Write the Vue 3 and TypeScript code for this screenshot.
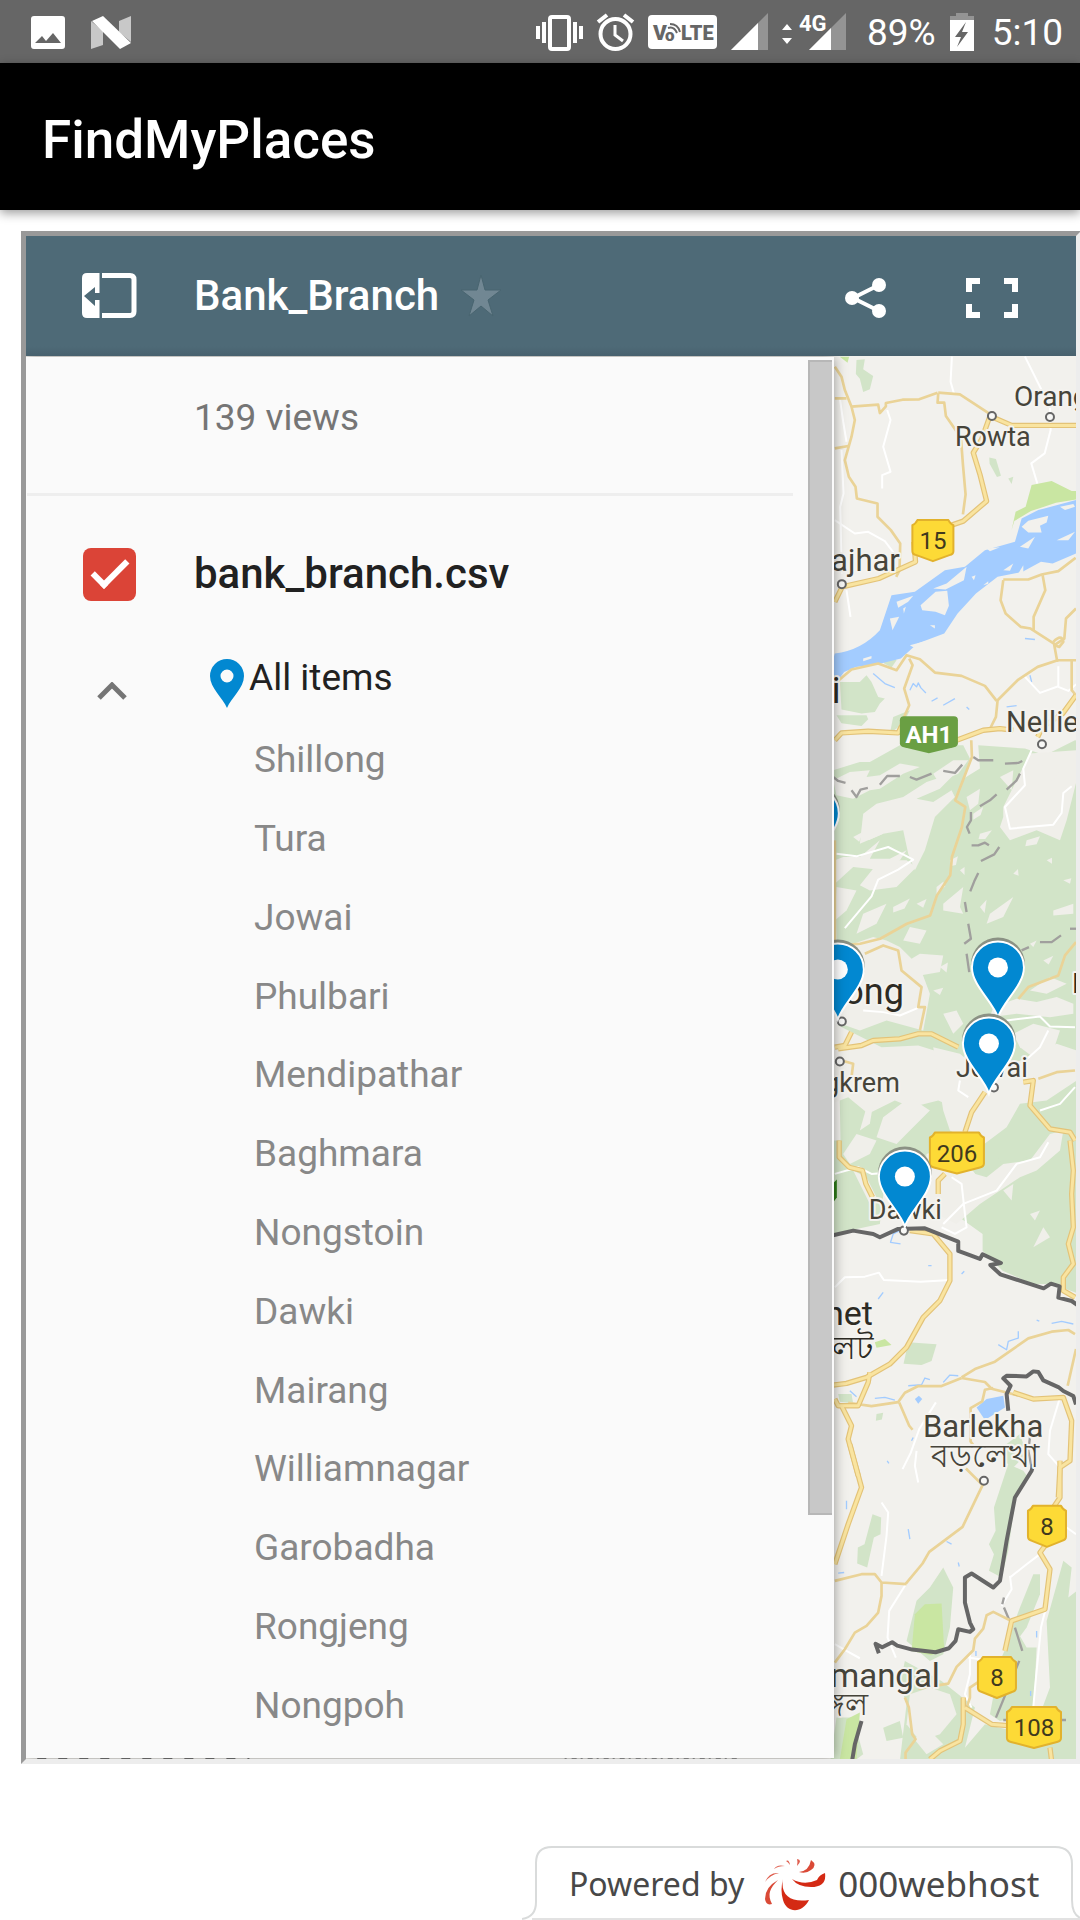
<script setup lang="ts">
import { ref } from 'vue'

interface Label { text: string; x: number; y: number; size: number; end?: boolean; light?: boolean }
interface Shield { text: string; x: number; y: number; w: number }
interface Point { x: number; y: number }

const layerOn = ref<boolean>(true)
const expanded = ref<boolean>(true)

const places: string[] = [
  'Shillong', 'Tura', 'Jowai', 'Phulbari', 'Mendipathar', 'Baghmara', 'Nongstoin',
  'Dawki', 'Mairang', 'Williamnagar', 'Garobadha', 'Rongjeng', 'Nongpoh',
]

const labels: Label[] = [
  { text: 'Orang', x: 1014, y: 406, size: 28, light: true },
  { text: 'Rowta', x: 955, y: 446, size: 27, light: true },
  { text: 'ajhar', x: 900, y: 571, size: 31, end: true, light: true },
  { text: 'i', x: 832, y: 703, size: 36 },
  { text: 'Nellie', x: 1006, y: 732, size: 29, light: true },
  { text: 'ong', x: 904, y: 1004, size: 36, end: true },
  { text: 'H', x: 1072, y: 993, size: 28 },
  { text: 'Jowai', x: 956, y: 1076, size: 27, light: true },
  { text: 'gkrem', x: 900, y: 1091, size: 27, end: true, light: true },
  { text: 'Dawki', x: 869, y: 1218, size: 27, light: true },
  { text: 'het', x: 873, y: 1324, size: 34, end: true },
  { text: 'লেট', x: 873, y: 1358, size: 32, end: true },
  { text: 'Barlekha', x: 923, y: 1436, size: 31, light: true },
  { text: 'বড়লেখা', x: 931, y: 1466, size: 32, light: true },
  { text: 'mangal', x: 940, y: 1686, size: 33, end: true, light: true },
  { text: 'ঙ্গল', x: 868, y: 1714, size: 31, end: true, light: true },
]

const shields: Shield[] = [
  { text: '15', x: 933, y: 520, w: 41 },
  { text: '206', x: 957, y: 1132, w: 54 },
  { text: '8', x: 1047, y: 1505, w: 38 },
  { text: '8', x: 997, y: 1656, w: 38 },
  { text: '108', x: 1034, y: 1706, w: 54 },
]

const shieldPath = (w: number): string => {
  const h = w / 2
  return `M${-h + 5} 0H${h - 5}Q${h - 3} 4 ${h} 5V31Q${h} 34 ${h - 4} 35L0 41L${-h + 4} 35Q${-h} 34 ${-h} 31V5Q${-h + 3} 4 ${-h + 5} 0Z`
}

const towns: Point[] = [
  { x: 992, y: 416 }, { x: 1050, y: 417 }, { x: 842, y: 584 }, { x: 1042, y: 744 },
  { x: 842, y: 1021 }, { x: 840, y: 1061 }, { x: 994, y: 1087 }, { x: 904, y: 1230 }, { x: 984, y: 1480 },
]

const pins: Point[] = [
  { x: 813, y: 813 }, { x: 838, y: 969 }, { x: 998, y: 967 }, { x: 989, y: 1043 }, { x: 905, y: 1176 },
]

// Terrain and road geometry is kept on a grid three times finer than the page.
const forest: string[] = [
  'M170 60l25 -2 -5 30 30 20 -10 40 -20 8 -10 -40 -12 -14z', 'M568 352l20 5 15 50 -12 4 -22 -40z', 'M625 415l15 -5 -5 22z',
  'M245 950l30 -5 15 15 -15 22 -22 -12z', 'M120 1025l60 0 20 -20 15 20 20 45 20 5 -15 15 -15 25 -40 5 -60 -12z', 'M110 1125l90 0 5 12 -20 20 -60 -8z',
  'M280 1130l50 -20 -20 40 -40 30z',
  'M100 1290l80 -25 30 0 90 -50 190 0 20 40 -20 60 50 -30 -5 -70 140 10 60 20 90 -45 60 20 0 1300 -70 -100 -70 100 -80 40 -60 -80 -180 20 -80 80 -80 -60 -140 20z',
  'M100 2400l100 0 60 80 -20 170 -140 30z',
  'M330 2400l230 0 60 90 -80 30 -50 -70 -20 60 -80 -40z',
  'M478 2630l60 -60 90 -40 30 -70 150 -60 30 50 0 410 -80 -30 -60 0 -90 -40 -60 -60 0 -50z',
  'M325 3005l85 6 -15 50 -30 12 -54 -4z', 'M115 3160l40 0 5 28 -40 -5z', 'M230 3220l20 -4 -4 20 -18 4z',
  'M620 3310l40 -30 20 60 -40 40 -30 -20z',
  'M218 3520l26 10 -2 50 -20 10 -20 90 -30 -12 2 -48 20 -10z',
  'M625 3370l45 20 15 20 -40 70 -20 150 -20 80 -38 -20 15 -50 -15 -30 20 -40 -5 -70z',
  'M430 3680l10 20 20 40 -10 120 -20 80 -40 20 -70 -60 30 -120 40 -40z',
  'M700 3700l20 0 0 60 -40 100 -30 40 -20 -20 30 -80z', 'M790 3660l25 20 -10 90 25 -20 0 650 -70 0 20 -200 -60 -80 30 -80 -10 -200z',
  'M645 3860l35 60 30 0 -10 200 -100 20 -30 -20 30 -160z',
  'M315 3960l110 60 100 80 -30 120 60 -70 130 30 145 -60 0 200 -440 0 -90 -60 20 -170 -20 -60z',
  'M110 4130l50 0 30 110 -40 30 -60 0z', 'M250 4160l50 -20 10 50 -50 10z',
]

const clearings: string[] = [
  'M100 1320l50 -25 60 -5 -10 20 40 -5 60 -35 60 10 -50 20 -70 45 -30 5 -50 25 -50 -10z',
  'M190 1420l40 -30 80 -20 70 -45 90 -30 -50 50 -70 30 50 10 55 -35 10 20 -60 60 -30 100 -30 60 -20 -50 -15 -70 -60 10 -70 30z',
  'M400 1300l60 -40 45 0 -30 40 -60 25z', 'M500 1370l40 -25 -5 45 -25 20z',
  'M105 1560l25 -10 50 0 60 -50 -30 55 60 0 50 -25 -20 30 -50 30 -90 -10 -55 50z',
  'M240 1560l80 0 30 20 -60 60 -80 10 -30 -15z', 'M110 1640l60 10 -30 60 -35 30z',
  'M190 1720l70 -30 -30 60 -60 30z', 'M430 1690l60 -50 -10 60 10 20 -60 -10z', 'M570 1720l70 -50 -30 60 -50 20z',
  'M610 1400l40 -80 40 -80 140 -10 0 90 -30 120 -20 60 -70 -30 -80 30 -30 -40 10 -30z',
  'M650 1310l50 -40 80 20 -20 30 -80 25z', 'M760 1710l60 -20 0 30 -60 5z', 'M600 1310l40 -20 -5 60z',
  'M160 1810l60 -20 40 10 40 20 60 60 30 80 -20 110 -110 -30 -80 30 -70 -25 20 -60z',
  'M330 1760l50 10 -20 40 -50 -10z', 'M310 1870l50 -30 70 5 -10 50 -60 10z',
  'M300 1950l60 10 5 60 -90 20 -50 -20z', 'M430 2020l40 -10 20 40 -30 30z',
  'M580 2000l70 -25 60 10 60 -15 50 20 0 30 -70 10 -100 -10 -80 10z',
  'M640 2080l60 -30 80 20 -20 60 -60 20 -40 -30z', 'M690 1950l60 -40 50 20 -60 30z',
  'M105 2050l60 30 80 40 110 -5 80 25 40 60 70 20 -10 70 -50 20 -70 -30 -80 20 -50 -20 -80 40 -60 -50 -50 20z',
  'M400 2120l80 20 60 50 100 -20 130 -60 60 20 0 90 -90 60 -80 10 -40 70 -80 60 -90 -50 -20 -60z',
  'M250 2330l80 -60 60 40 -60 60 -40 40 -60 -20z', 'M200 2300l20 -10 -10 60 -30 20z',
  'M130 2440l40 -60 60 20 -20 40 -60 30z', 'M160 2490l40 20 30 60 -20 20z',
  'M380 2440l60 -20 50 70 70 20 50 -40 80 -10 60 -80 40 -10 -10 60 -70 60 -50 20 -120 80 -70 60 -60 -30 -40 -70z',
  'M610 2550l30 -20 -5 50z', 'M730 2660l20 30 -50 30z', 'M690 2620l30 -10 -15 30z',
  'M330 4060l60 -20 60 20 20 60 -50 60 -60 20 -40 -50z', 'M340 4190l60 -10 30 30 -50 30z',
  'M520 1420l30 -20 -8 24 -22 14z', 'M450 1560l24 -12 -6 26 -18 4z', 'M540 1480l36 -10 -20 26 -20 0z', 'M410 1640l20 -16 6 14 -26 24z',
  'M680 1500l40 -12 -10 24 -34 6z', 'M740 1560l16 -8 0 18z', 'M640 1600l14 -14 2 20z', 'M540 1700l20 -22 -6 40z',
  'M480 1590l14 -10 0 24z', 'M790 1620l24 -6 -4 16z', 'M280 1700l50 -26 -16 30 -34 12z', 'M350 1690l30 -14 -10 26z',
  'M420 1880l24 -14 -4 30z', 'M400 1950l30 -8 -10 22z', 'M730 1860l30 -14 -14 26z', 'M690 1810l20 -10 -10 20z',
  'M230 1460l20 20 -44 20 4 -20z', 'M160 1490l30 -16 -12 30z', 'M500 2320l36 10 -20 20z',
]

const whiteRoads: string[] = [
  'M456 50l-4 75 10 35', 'M675 50l45 90 30 60 2 70 -18 70 -40 30 18 60', 'M262 210l10 30 -22 80 22 75 -25 10 0 40', 'M120 175l10 70 10 60', 'M125 330l6 130 -10 40 5 200',
  'M105 540l60 40 40 -5 50 28 30 40', 'M140 750l12 80', 'M675 1010l45 48 55 -20 0 -60', 'M775 1040l30 12 24 -20',
  'M695 1230l-25 55 5 50 -60 65 15 65 130 -12 25 -35 5 -60 25 -20', 'M110 1540l60 8 95 -28 20 10 20 10 35 18 -45 30 -60 30 -20 50 -80 95',
  'M190 2010l60 5 50 10 60 -25', 'M620 2040l100 -12 30 30 75 2', 'M745 2070l-25 50 -55 50', 'M480 2220l-5 30 30 20',
  'M105 2500l70 -20 40 20 60 -5', 'M455 2510l30 20 10 90 5 40 -35 20 -40 -20', 'M430 2650l60 -60 100 -40 60 -80 70 -20 25 -45', 'M720 2310l60 -20 45 -50',
  'M105 2840l30 -30 60 -2 42 -12 15 22 110 5 90 -5', 'M408 3185l-50 80 -25 70 -25 50', 'M350 3330l-5 45 10 50', 'M245 3485l20 30 -5 70 -15 120',
  'M318 3730l-50 80 -5 80 25 60', 'M105 3910l35 20 40 22', 'M780 3170l-30 100 -5 70 35 40', 'M630 3710l50 -40 40 -30',
  'M505 3950l40 6', 'M510 3940l0 60 -15 60 20 40', 'M738 3800l-15 60 -15 150 -10 110', 'M630 3705l5 40 -30 50', 'M800 3560l28 20',
]

const roads: string[] = [
  'M105 80l20 30 10 40 20 50 10 40 -10 50 -20 70 12 50 20 30 4 35 62 15 0 40 40 40 28 40 -2 80 -10 20', 'M155 200l80 -6 5 25 18 -20 0 -10 50 -10 50 -1 55 -20',
  'M105 175h35M105 325l45 -8', 'M415 160l-2 28 20 0 5 40 45 65 6 80 8 90 -8 60', 'M415 158l65 5 95 62',
  'M610 720l-8 60 15 40 45 40 30 5 70 45 10 55', 'M610 718l75 0 40 -15 50 -10 52 -40', 'M728 705l8 45 -35 80 0 40', 'M828 805l-30 30 -5 60 -30 20', 'M760 905q25 -25 30 0l-12 15 -15 -5', 'M828 960l-55 0 -60 20 -60 40 -60 60 -5 50 -20 40',
  'M105 1030l50 -42 80 -18 55 20 30 -45 40 12 45 40 80 10 70 30 35 45', 'M328 955l10 20 -25 70 15 50 -35 80', 'M815 960l0 90 13 15',
  'M514 1200l2 50 -50 130 30 20 -10 60 -30 90 -5 55 -40 60 -20 60 -70 25 -80 45 -60 15 -60 5', 'M105 1500l0 300',
  'M195 1840l55 -25 45 15 10 60 60 50 -10 60 20 0 -15 70', 'M655 1975l30 -35 90 -35 20 -60 33 -40', 'M715 2215l55 -20 55 -5', 'M125 2160l35 10 -5 40 -20 30',
  'M485 3110l40 -25 60 -22 100 -70 70 -20 50 -5 20 12', 'M828 3025l-25 110', 'M485 3112l70 12 20 20 80 20', 'M485 3112l-60 24 -70 0 -40 20 -20 28 -80 12 -70 -10', 'M298 3185l30 70 10 12', 'M580 3142l-25 5 -8 35 -35 20 0 100 15 20',
  'M105 3720l80 -20 40 0 20 25 75 5M245 3725l0 40 -10 50 -35 40 -35 20 -30 50 -30 40', 'M318 3728l50 -60 20 -35 100 -75 60 -125 -50 -50',
  'M630 3838l-50 -25 -20 10 -10 40 -25 30 -5 35 -50 50 -25 50 -90 15', 'M315 4070l12 30 10 80 10 15 -30 40 0 30', 'M540 4020l-30 20 0 30 -10 30',
]

const highways: string[] = [
  'M105 785l22 -45 110 -25 110 -50 -5 -60', 'M455 555l35 -12 70 -60 -20 -80 -20 -65 25 -40 25 -70 65 28 200 0', 'M105 1200l20 -22 80 -5 90 5 10 -20', 'M470 1200l80 -30 50 -5 40 5', 'M828 1065l-40 55 -60 40 -15 30',
  'M115 2125l70 -10 35 -15 80 -5 55 -15 40 0 80 40', 'M105 2120l30 -5 20 -40', 'M670 2225l30 -5 -10 75 60 70 60 10 15 25', 'M555 2255l-40 60 -20 60',
  'M118 2400l0 50 30 30 40 10 10 40 20 40', 'M435 2500l-20 20 0 40', 'M810 2400l10 90 -5 70 5 100 -15 50 15 60 -30 40 0 40 35 20', 'M330 2670l70 10 50 60 0 80 -30 60 -50 50 -50 90 -50 50 -70 40 -60 18 -40 5',
  'M210 3095l-5 30 -30 70 -60 0 -10 -20', 'M125 3195l30 60 -10 40 30 110', 'M640 3155l60 20 90 -5 25 70 -5 120 -30 20 -5 90', 'M150 3310l35 130 -40 110 -40 120',
  'M780 3360l0 110 -20 30', 'M735 3615l-15 20 30 50 -15 120 -100 35 -20 90', 'M490 4070l0 80 -10 50 -60 30 -30 25M495 4100l80 50 60 5', 'M750 4220l5 40',
]

const water: string[] = [
  'M105 940q80 -10 135 -70l35 -105 70 -10 90 -65 60 -10 60 -50 90 -25 20 -70 50 -25 113 -30V640l-70 30 -35 -5 -55 30 -75 15 -65 50 -55 60 -40 60 -80 30 -50 45 -60 15 -75 10 -35 15 -30 40 -28 10z',
  'M530 3200l30 -25 50 -10 5 35 -60 38z', 'M345 3175l12 -10 10 10 -12 14z',
]
const islands: string[] = [
  'M290 785l50 -18 -15 18 -30 18z', 'M270 835l28 -5 -20 40z', 'M362 795l45 -40 35 -3 5 45 -12 28 -28 -10 -40 -5z', 'M400 745l40 -15 60 -50 -8 40 -55 28z', 'M660 620l45 -30 -20 35z', 'M665 560l20 -18 60 -15 -5 20 -20 10 5 20 -40 0z', 'M770 600l55 -25 -20 25z', 'M330 915l45 -12 0 8 -35 10z', 'M190 955l25 -8 0 8 -25 8z', 'M560 625l40 -4 -30 12z', 'M780 500l40 -8 5 8 -30 10z', 'M515 710l12 -5 -5 15z', 'M550 735l15 -12 0 8z', 'M390 855l15 0 0 10z', 'M310 805l8 -5 -6 20z', 'M610 690l30 -20 -10 22z', 'M655 700l15 -25 0 22z',
]
const parks: string[] = [
  'M635 570l12 -55 30 -15 18 -65 60 -12 60 30 13 0 0 25 -60 10 -75 25 -50 30z', 'M120 50l28 0 -5 18z', 'M225 3005l30 -10 20 18 -45 8z', 'M335 3930l10 -110 30 -30 50 -2 8 140 -40 15z', 'M120 4255l20 -120 40 -20 -10 140z', 'M695 535l25 -12 5 12 -20 8z',
]
const creeks: string[] = [
  'M220 1000l35 30 30 12', 'M330 1050l10 -20 10 10 5 -12 8 15 15 15', 'M395 1083l18 -10M430 1095l35 -20M500 1100l8 8M620 1100l30 -4', 'M690 1005l5 20M675 895l30 3', 'M310 2665l-30 15 -8 25 30 5M320 2650l-18 18', 'M595 3012l25 15 5 -25 30 -10 0 -20', 'M755 2948l30 -6 35 8M710 2938l8 3', 'M385 2775h10M485 2800l8 -8M235 2875l15 -20',
  'M430 3125l20 -22 25 2M325 3135l40 -3 10 -20 15 5', 'M225 3173l30 -3 30 8M150 3150l20 18', 'M335 3300l5 -10M262 3360l5 8M140 3480v25M325 3565l5 30M440 3602l15 8M475 3665l3 12M115 3697l18 -2', 'M710 3870v20M528 3930v15M692 4050v15',
]
const stateLines: string[] = [
  'M100 1310l15 12 22 6', 'M155 1350l15 20 12 -22 22 -5', 'M240 1333l22 -26 38 0', 'M330 1310l20 8 45 -18', 'M430 1292l35 6 22 -25', 'M520 1250l15 10 45 0', 'M615 1270l40 -2 12 -6', 'M660 1300l-10 20 -30 28', 'M590 1362l-20 18 -30 18', 'M513 1415l0 25 -12 20 8 20', 'M515 1515l20 0 20 -8 12 8', 'M598 1520l-15 22 -40 20', 'M535 1598l-12 25 -12 30', 'M495 1685l5 30', 'M505 1750l8 45 -20 15', 'M500 1840l8 55', 'M665 1830l22 -10', 'M720 1805l35 0 28 -20', 'M810 1765l18 0',
  'M612 3770l-5 20 M612 3800l15 35', 'M645 3860l22 70', 'M658 3960l-70 170', 'M610 4137h30M780 4137h18', 'M690 3290l-5 40 10 50',
]
const borders: string[] = [
  'M100 2684l60 -14 60 10 20 10 55 -25 80 -2 100 40 0 28 65 24 8 -14 55 26 -32 6 30 28 130 42 22 -14 26 8 -4 34 40 10 20 14',
  'M625 3210l-5 -50 12 -25 -22 -22 10 -8 60 2 20 -15 15 2 15 25 45 20 15 12 30 15 8 25',
  'M700 3370l-5 20 -50 80 -25 130 -20 120 -20 20 -65 -42 -20 12 0 75 15 60 10 20 -10 8 -35 -8 -8 35 -20 22 -40 12 -70 -8 -45 -12 -15 -10 -30 15 -20 -10 10 28', 'M185 4140l-20 70 -10 60',
]
</script>

<template>
  <div class="screen">
    <div class="status-bar">
      <svg width="32" height="36" viewBox="0 0 32 36"><path fill="#fff" fill-rule="evenodd" d="M3 1h28q3 0 3 3v27q0 3-3 3H3q-3 0-3-3V4q0-3 3-3zM4 28h26L22 18l-7 8-4-5z" /></svg>
      <svg class="nougat" width="40" height="36" viewBox="0 0 40 36"><path fill="#c8c8c8" d="M0 6l12 10v14L0 34zM28 6l12-5v26L28 17z" /><path fill="#fff" d="M1 6l11-5 28 27-11 6z" /></svg>
      <div class="status-right">
        <svg width="47" height="40" viewBox="0 0 47 40"><path fill="#fff" d="M0 13h4v13H0zM6 9h4v21H6zM37 9h4v21h-4zM43 13h4v13h-4z" /><rect x="14" y="4" width="19" height="32" rx="2" fill="none" stroke="#fff" stroke-width="4" /></svg>
        <svg width="37" height="40" viewBox="0 0 37 40" fill="none" stroke="#fff" stroke-width="4"><circle cx="18.500" cy="21" r="15" /><path d="M18 12v10l8 6" stroke-width="3" /><path d="M1 9l9-7M36 9l-9-7" /></svg>
        <svg width="69" height="40" viewBox="0 0 69 40"><rect y="2" width="69" height="34" rx="4" fill="#fff" /><g fill="#666" font-family="Roboto, sans-serif" font-weight="900" font-size="21"><text x="5" y="27">V</text><text x="17" y="28" font-size="17">o</text><text x="33" y="27" font-size="20">LTE</text></g><path fill="none" stroke="#666" stroke-width="2" d="M20 15q6-2 9 5M22 11q8 0 10 8" /></svg>
        <svg width="37" height="40" viewBox="0 0 37 40"><path fill="#949494" d="M37 0v37H0z" /><path fill="#fff" d="M27 10v27H0z" /></svg>
        <svg width="65" height="40" viewBox="0 0 65 40"><path fill="#fff" d="M0 17l5-6 5 6zM0 25l5 6 5-6z" /><path fill="#949494" d="M64 0v37H27z" /><path fill="#666" d="M17 0h26v18H17z" /><path fill="#fff" d="M49 15v22H27z" /><text x="17" y="18" fill="#fff" font-family="Roboto, sans-serif" font-weight="700" font-size="22">4G</text></svg>
        <span class="battery-text">89%</span>
        <svg width="24" height="40" viewBox="0 0 24 40"><path fill="#949494" d="M6 0h12v3h6v5H0V3h6z" /><path fill="#fff" d="M0 7h24v31H0z" /><path fill="#666" d="M16 9L5 24h6L7 34l11-15h-6z" /></svg>
        <span class="clock">5:10</span>
      </div>
    </div>

    <header class="app-bar"><h1>FindMyPlaces</h1></header>

    <main class="frame">
      <div class="map-header">
        <button type="button" class="icon-btn" aria-label="Close panel">
          <svg width="56" height="46" viewBox="0 0 56 46"><path fill="#fff" fill-rule="evenodd" d="M5 0h12.500v20H13v-6L2 23l11 10v-6h4.500v18H5q-5 0-5-5V5q0-5 5-5z" /><path fill="none" stroke="#fff" stroke-width="5" d="M20 2.500h28q4 0 4 4v32q0 4-4 4H20" /></svg>
        </button>
        <h2>Bank_Branch</h2>
        <button type="button" class="icon-btn star" aria-label="Star map">
          <svg width="40" height="42" viewBox="0 0 40 42"><path fill="#718793" stroke="#496570" stroke-width="1" d="M20 0l4 15h16l-13 10 5 16-12-10-12 10 5-16L0 15h16z" /></svg>
        </button>
        <button type="button" class="icon-btn tool share" aria-label="Share">
          <svg width="42" height="42" viewBox="0 0 42 42"><path stroke="#fff" stroke-width="4" fill="none" d="M34 8L8 21l26 13" /><g fill="#fff"><circle cx="34" cy="8" r="7" /><circle cx="7" cy="21" r="7" /><circle cx="34" cy="34" r="7" /></g></svg>
        </button>
        <button type="button" class="icon-btn tool full" aria-label="Full screen">
          <svg width="52" height="42" viewBox="0 0 52 42" fill="none" stroke="#fff" stroke-width="6"><path d="M3 15V4h11M38 4h11v11M49 27v11H38M14 38H3V27" /></svg>
        </button>
      </div>

      <div class="map-body">
        <svg class="map" viewBox="26 356 1050 1402" preserveAspectRatio="xMaxYMin slice" role="img" aria-label="Map">
          <rect x="26" y="356" width="1050" height="1402" fill="#f2f1ed" />
          <g transform="translate(800 340) scale(.33333)" stroke-linejoin="round">
            <path v-for="d in forest" :key="d" :d="d" fill="#d2e4c8" />
            <path v-for="d in clearings" :key="d" :d="d" fill="#f0efea" />
            <path v-for="d in parks" :key="d" :d="d" fill="#c9e6a2" />
            <path v-for="d in water" :key="d" :d="d" fill="#a3ccff" />
            <path v-for="d in islands" :key="d" :d="d" fill="#f2f1ed" />
            <g fill="none">
              <path v-for="d in creeks" :key="d" :d="d" stroke="#a3ccff" stroke-width="4" />
              <path v-for="d in whiteRoads" :key="d" :d="d" stroke="#fff" stroke-width="6" />
              <path v-for="d in stateLines" :key="d" :d="d" stroke="#a09f9d" stroke-width="7" />
              <path v-for="d in roads" :key="d" :d="d" stroke="#ead397" stroke-width="8" />
              <path v-for="d in highways" :key="d" :d="d" stroke="#e3c378" stroke-width="16" />
              <path v-for="d in highways" :key="d" :d="d" stroke="#f9e4a0" stroke-width="9" />
              <path v-for="d in borders" :key="d" :d="d" stroke="#666" stroke-width="12" />
            </g>
          </g>
          <path d="M38 1757H250" stroke="#777" stroke-width="2" stroke-dasharray="9 12" />
          <path d="M565 1757H740" stroke="#999" stroke-width="2" stroke-dasharray="2 5 5 4" />
          <path d="M834 1182l3-3v18l-3 4z" fill="#2e7d18" />
          <circle v-for="t in towns" :key="`${t.x}-${t.y}`" :cx="t.x" :cy="t.y" r="4" fill="#f8f8f6" stroke="#666" stroke-width="2" />
          <text
            v-for="l in labels" :key="l.text" :x="l.x" :y="l.y" :font-size="l.size"
            :text-anchor="l.end ? 'end' : 'start'" :class="['label', { light: l.light }]"
          >{{ l.text }}</text>
          <g v-for="s in shields" :key="`${s.x}-${s.y}`" :transform="`translate(${s.x} ${s.y})`">
            <path :d="shieldPath(s.w)" fill="#fdda36" stroke="#e2b22c" stroke-width="2" stroke-linejoin="round" />
            <text y="29" class="shield-text" text-anchor="middle">{{ s.text }}</text>
          </g>
          <path d="M904 716h50q4 0 4 4v23q0 3-4 4l-25 6-25-6q-4-1-4-4v-23q0-4 4-4z" fill="#6a9f43" />
          <text x="929" y="743" class="ah-text" text-anchor="middle">AH1</text>
          <g v-for="p in pins" :key="`${p.x}-${p.y}`" :transform="`translate(${p.x} ${p.y})`">
            <circle cy="-3" r="27" fill="#8b9184" />
            <path d="M0 50C-5 34-26 18-26 0A26 26 0 0 1 26 0C26 18 5 34 0 50Z" fill="#0288d1" stroke="#fff" stroke-width="2" />
            <circle r="10" fill="#fff" />
          </g>
        </svg>

        <aside class="panel">
          <div class="scroll">
            <p class="views">139 views</p>
            <div class="layer">
              <input id="layer" v-model="layerOn" type="checkbox" class="check">
              <label for="layer">bank_branch.csv</label>
            </div>
            <div class="group">
              <button type="button" class="icon-btn chevron" aria-label="Collapse items" @click="expanded = !expanded">
                <svg width="30" height="18" viewBox="0 0 30 18"><path fill="none" stroke="#757575" stroke-width="5" d="M2 16L15 3l13 13" /></svg>
              </button>
              <svg class="group-pin" width="34" height="49" viewBox="0 0 34 49"><path fill="#0288d1" fill-rule="evenodd" d="M17 49C13 39 0 29 0 17a17 17 0 0 1 34 0c0 12-13 22-17 32zM17 10.500a6.500 6.500 0 1 0 0 13 6.500 6.500 0 0 0 0-13z" /></svg>
              <span>All items</span>
            </div>
            <ul v-if="expanded" class="places">
              <li v-for="p in places" :key="p">{{ p }}</li>
            </ul>
          </div>
          <div class="scrollbar"><div class="thumb"></div></div>
        </aside>
      </div>
    </main>

    <footer class="footer">
      <a class="badge" href="#">
        <svg class="badge-shape" width="558" height="74" viewBox="0 0 558 74"><path fill="#fff" stroke="#d9dbdb" stroke-width="2" d="M0 73Q14 71 14 56V17Q14 1 30 1H533Q550 1 550 18V54Q550 68 558 72" /><path d="M10 73H558" stroke="#e2e2e2" stroke-width="2" /></svg>
        <span class="powered">Powered by</span>
        <svg class="logo" width="62" height="54" viewBox="0 0 62 54">
          <g fill="#d42a14"><path d="M19 22C16 38 27 46 45 43C39 56 23 57 19 43Q16 33 19 22Z" /><path d="M28 22Q40 29 53 23Q55 18 61 16Q63 30 47 30Q34 30 28 22Z" /><path d="M35 15Q45 14 47 3Q54 8 47 13Q42 17 35 15Z" opacity=".85" /><path d="M14 23C6 31 3 37 8 47Q2 49 1 42Q1 30 14 23Z" opacity=".85" /><path d="M33 2Q39 3 33 9Q34 5 33 2ZM22 4Q25 2 26 8Q24 5 22 4ZM10 12Q13 7 21 9Q14 9 10 12ZM1 25Q5 15 15 16Q6 18 1 25Z" opacity=".75" /></g>
        </svg>
        <span class="host">000webhost</span>
      </a>
    </footer>
  </div>
</template>

<style>
body { background: #fff; }
</style>

<style scoped>
.screen { box-sizing: border-box; min-height: 100vh; display: flex; flex-direction: column; overflow: hidden; font-family: Roboto, sans-serif; color: #212121; }
.status-bar { box-sizing: border-box; height: 63px; padding: 2px 17px 0 31px; display: flex; align-items: center; background: #666; color: #fff; }
.status-bar svg { overflow: visible; }
.nougat { margin-left: 28px; }
.status-right { margin-left: auto; display: flex; align-items: center; gap: 14px; font-size: 37px; line-height: 40px; }
.battery-text { margin-left: 6px; }
.clock { margin-left: 4px; }
.app-bar { box-sizing: border-box; height: 147px; padding: 6px 42px 0; display: flex; align-items: center; background: #000; color: #fff; box-shadow: 0 3px 10px rgba(0, 0, 0, .4); }
h1 { margin: 0; font-size: 53px; line-height: 60px; font-weight: 500; }
.frame { flex: 1; margin: 21px -1px 0 21px; border: 5px solid; border-color: #999 #ededed #ededed #999; display: flex; flex-direction: column; }
.map-header { height: 120px; flex: none; padding: 0 58px 0 56px; box-sizing: border-box; display: flex; align-items: center; background: linear-gradient(#4e6a77 92%, #48616e); color: #fff; }
.icon-btn { border: 0; padding: 0; background: none; display: flex; }
h2 { margin: 0 0 0 56px; font-size: 42px; line-height: 48px; font-weight: 500; }
.star { margin-left: 22px; }
.tool { padding-top: 4px; }
.share { margin-left: auto; }
.full { margin-left: 79px; }
.map-body { flex: 1; position: relative; overflow: hidden; background: #f2f1ed; }
.map { display: block; width: 100%; height: 100%; position: absolute; inset: 0; }
.label { fill: #2d2b24; stroke: #f4f3ef; stroke-width: 4px; stroke-linejoin: round; paint-order: stroke; font-family: Roboto, sans-serif; }
.label.light { fill: #46443a; }
.shield-text { font: 400 24px Roboto, sans-serif; fill: #40391d; }
.ah-text { font: 700 24px Roboto, sans-serif; fill: #fff; }
.panel { position: absolute; top: 1px; bottom: 1px; left: 0; width: 808px; display: flex; background: #fafafa; box-shadow: 0 0 12px rgba(0, 0, 0, .4); }
.scroll { flex: 1; min-width: 0; overflow: hidden; }
.views { margin: 0 15px 0 1px; padding: 40px 0 54px 167px; border-bottom: 3px solid #eee; font-size: 37px; line-height: 42px; color: #757575; }
.layer { display: flex; align-items: center; height: 54px; margin-top: 51px; padding-left: 57px; font-size: 42px; line-height: 48px; font-weight: 500; }
.layer label { margin-left: 58px; }
.check { appearance: none; margin: 0; width: 53px; height: 53px; border-radius: 8px; border: 4px solid #757575; display: grid; place-items: center; }
.check:checked { background: #db4437; border: 0; }
.check:checked::after { content: ""; width: 30px; height: 13px; border: solid #fff; border-width: 0 0 6px 6px; transform: translateY(-5px) rotate(-45deg); }
.group { display: flex; align-items: flex-start; margin-top: 56px; height: 64px; padding-left: 71px; font-size: 37px; line-height: 42px; }
.chevron { margin-top: 25px; }
.group-pin { margin: 2px 5px 0 83px; }
.places { list-style: none; margin: 0; padding: 0 0 0 228px; height: 1024px; display: grid; align-items: center; font-size: 37px; line-height: 42px; color: #888; }
.scrollbar { width: 26px; padding-top: 3px; }
.thumb { box-sizing: border-box; width: 24px; height: 1155px; background: #c8c8c8; border: 2px solid #b7b7b7; border-right: 0; }
.footer { height: 156px; flex: none; display: flex; justify-content: flex-end; align-items: flex-end; }
.badge { position: relative; width: 558px; height: 74px; box-sizing: border-box; padding: 2px 0 0 47px; display: flex; align-items: center; font-family: "Noto Sans", sans-serif; color: #484848; text-decoration: none; }
.badge-shape { position: absolute; inset: 0; }
.powered, .logo, .host { position: relative; }
.powered { font-size: 32px; line-height: 40px; }
.logo { margin: 0 12px 0 20px; }
.host { font-size: 35px; line-height: 40px; }
</style>
